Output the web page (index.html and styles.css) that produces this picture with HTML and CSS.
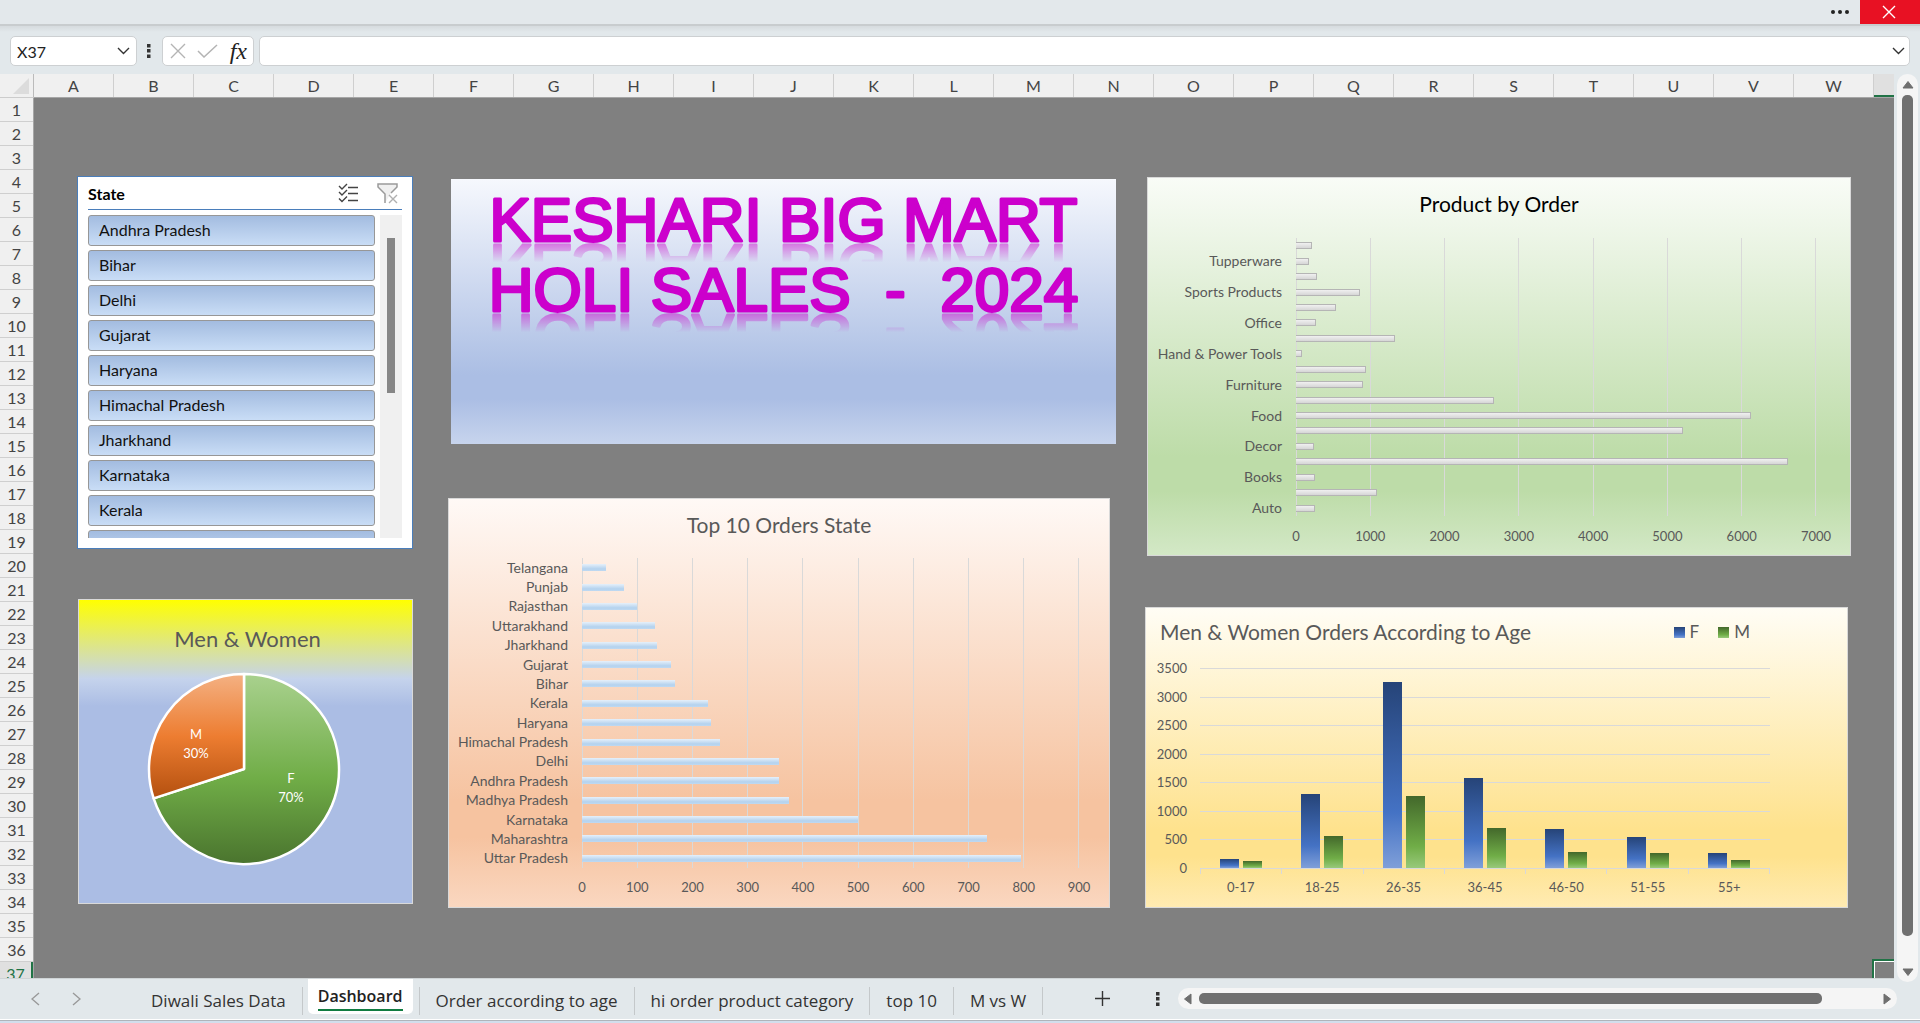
FILE: index.html
```html
<!DOCTYPE html>
<html lang="en">
<head>
<meta charset="utf-8">
<title>Dashboard</title>
<link rel="stylesheet" href="styles.css">
</head>
<body>
<div class="app">
  <header class="titlebar">
    <button class="more" aria-label="More options"><svg width="20" height="6" viewBox="0 0 20 6"><g fill="#222"><circle cx="3" cy="3" r="2"/><circle cx="10" cy="3" r="2"/><circle cx="17" cy="3" r="2"/></g></svg></button>
    <button class="close" aria-label="Close"><svg width="14" height="14" viewBox="0 0 14 14"><path d="M1 1l12 12M13 1L1 13" stroke="#fff" stroke-width="1.4"/></svg></button>
  </header>

  <div class="formulabar">
    <div class="namebox">
      <input type="text" value="X37" aria-label="Name box">
      <button aria-label="Open name list"><svg width="13" height="8" viewBox="0 0 13 8"><path d="M1 1l5.500 5.500L12 1" fill="none" stroke="#333" stroke-width="1.4"/></svg></button>
    </div>
    <svg class="grip" width="4" height="14" viewBox="0 0 4 14"><path d="M0 0h3.500v3.500h-3.500zM0 5h3.500v3.500h-3.500zM0 10.500h3.500v3.500h-3.500z" fill="#333"/></svg>
    <div class="fxbox">
      <button aria-label="Cancel"><svg width="16" height="16" viewBox="0 0 16 16"><path d="M1 1l14 14M15 1L1 15" stroke="#b4b4b4" stroke-width="1.4"/></svg></button>
      <button aria-label="Enter"><svg width="21" height="14" viewBox="0 0 21 14"><path d="M1 7l6 6L20 1" fill="none" stroke="#b4b4b4" stroke-width="1.500"/></svg></button>
      <button class="fx" aria-label="Insert function">fx</button>
    </div>
    <div class="formula">
      <input type="text" value="" aria-label="Formula bar">
      <button aria-label="Expand formula bar"><svg width="13" height="8" viewBox="0 0 13 8"><path d="M1 1l5.500 5.500L12 1" fill="none" stroke="#333" stroke-width="1.4"/></svg></button>
    </div>
  </div>

  <div class="workspace">
    <div class="grid">
      <div class="corner"><svg width="16" height="16" viewBox="0 0 16 16"><path d="M16 0v16H0z" fill="#dcdcdc"/></svg></div>
      <div class="cols"><span>A</span><span>B</span><span>C</span><span>D</span><span>E</span><span>F</span><span>G</span><span>H</span><span>I</span><span>J</span><span>K</span><span>L</span><span>M</span><span>N</span><span>O</span><span>P</span><span>Q</span><span>R</span><span>S</span><span>T</span><span>U</span><span>V</span><span>W</span><span class="current"></span></div>
      <div class="rows"><span>1</span><span>2</span><span>3</span><span>4</span><span>5</span><span>6</span><span>7</span><span>8</span><span>9</span><span>10</span><span>11</span><span>12</span><span>13</span><span>14</span><span>15</span><span>16</span><span>17</span><span>18</span><span>19</span><span>20</span><span>21</span><span>22</span><span>23</span><span>24</span><span>25</span><span>26</span><span>27</span><span>28</span><span>29</span><span>30</span><span>31</span><span>32</span><span>33</span><span>34</span><span>35</span><span>36</span><span class="current">37</span></div>

      <main class="sheet">
        <div class="column column-left">
          <section class="slicer">
            <header>
              <h2>State</h2>
              <button aria-label="Multi-select"><svg width="20" height="20" viewBox="0 0 20 20"><path d="M1 3l3 3 5-5M1 9l3 3 5-5M1 15.500l3 3 5-5" fill="none" stroke="#444" stroke-width="1.4"/><path d="M10 4.500h10M10 10.500h10M10 17.500h10" stroke="#444" stroke-width="1.6"/></svg></button>
              <button aria-label="Clear filter"><svg width="21" height="21" viewBox="0 0 21 21"><path d="M8 20v-9L1 4V1h19v3l-6 6" fill="#f0f0f0" stroke="#9a9a9a" stroke-width="1.500"/><path d="M12 12l8 8M20 12l-8 8" stroke="#b0b0b0" stroke-width="1.4"/></svg></button>
            </header>
            <div class="slicer-body">
              <div class="slicer-list">
                <button>Andhra Pradesh</button><button>Bihar</button><button>Delhi</button><button>Gujarat</button><button>Haryana</button><button>Himachal Pradesh</button><button>Jharkhand</button><button>Karnataka</button><button>Kerala</button><button aria-label="Next state"></button>
              </div>
              <div class="slicer-track"><div class="slicer-thumb"></div></div>
            </div>
          </section>

          <section class="chart pie-chart">
            <h2>Men &amp; Women</h2>
            <svg class="pie" width="194" height="194" viewBox="-97 -97 194 194">
              <defs>
                <linearGradient id="men" x1="0" y1="0" x2="0" y2="1"><stop offset="0" stop-color="#f4b183"/><stop offset=".5" stop-color="#ed7d31"/><stop offset="1" stop-color="#b4500f"/></linearGradient>
                <linearGradient id="women" x1="0" y1="0" x2="0" y2="1"><stop offset="0" stop-color="#a9d18e"/><stop offset=".55" stop-color="#70ad47"/><stop offset="1" stop-color="#4a742e"/></linearGradient>
              </defs>
              <g stroke="#fff" stroke-width="2.500" stroke-linejoin="round">
                <path d="M0 0V-95A95 95 0 1 1 -90.350 29.360Z" fill="url(#women)"/>
                <path d="M0 0L-90.350 29.360A95 95 0 0 1 0 -95Z" fill="url(#men)"/>
              </g>
              <g class="pie-labels"><text x="-48" y="-30">M</text><text x="-48" y="-11">30%</text><text x="47" y="14">F</text><text x="47" y="33">70%</text></g>
            </svg>
          </section>
        </div>

        <div class="column column-middle">
          <section class="banner">
            <h1>
              <span class="banner-line"><svg width="100%" height="46"><text x="50%" y="44">KESHARI BIG MART</text></svg></span>
              <span class="banner-line"><svg width="100%" height="46"><text x="50%" y="44">HOLI SALES&#160; -&#160; 2024</text></svg></span>
            </h1>
          </section>

          <section class="chart bar-chart states">
            <h2>Top 10 Orders State</h2>
            <div class="hplot">
              <div class="labels"><span>Telangana</span><span>Punjab</span><span>Rajasthan</span><span>Uttarakhand</span><span>Jharkhand</span><span>Gujarat</span><span>Bihar</span><span>Kerala</span><span>Haryana</span><span>Himachal Pradesh</span><span>Delhi</span><span>Andhra Pradesh</span><span>Madhya Pradesh</span><span>Karnataka</span><span>Maharashtra</span><span>Uttar Pradesh</span></div>
              <div class="lines"><i></i><i></i><i></i><i></i><i></i><i></i><i></i><i></i><i></i></div>
              <div class="bars"><div><b style="width:4.9%"></b></div><div><b style="width:8.4%"></b></div><div><b style="width:11%"></b></div><div><b style="width:14.6%"></b></div><div><b style="width:15%"></b></div><div><b style="width:18%"></b></div><div><b style="width:18.7%"></b></div><div><b style="width:25.3%"></b></div><div><b style="width:25.9%"></b></div><div><b style="width:27.7%"></b></div><div><b style="width:39.6%"></b></div><div><b style="width:39.6%"></b></div><div><b style="width:41.7%"></b></div><div><b style="width:55.6%"></b></div><div><b style="width:81.4%"></b></div><div><b style="width:88.4%"></b></div></div>
              <div class="axis"><span>0</span><span>100</span><span>200</span><span>300</span><span>400</span><span>500</span><span>600</span><span>700</span><span>800</span><span>900</span></div>
            </div>
          </section>
        </div>

        <div class="column column-right">
          <section class="chart bar-chart products">
            <h2>Product by Order</h2>
            <div class="hplot">
              <div class="labels"><span></span><span>Tupperware</span><span></span><span>Sports Products</span><span></span><span>Office</span><span></span><span>Hand &amp; Power Tools</span><span></span><span>Furniture</span><span></span><span>Food</span><span></span><span>Decor</span><span></span><span>Books</span><span></span><span>Auto</span></div>
              <div class="lines"><i></i><i></i><i></i><i></i><i></i><i></i><i></i></div>
              <div class="bars"><div><b style="width:3.1%"></b></div><div><b style="width:2.5%"></b></div><div><b style="width:4%"></b></div><div><b style="width:12.4%"></b></div><div><b style="width:7.6%"></b></div><div><b style="width:3.8%"></b></div><div><b style="width:19%"></b></div><div><b style="width:1.1%"></b></div><div><b style="width:13.4%"></b></div><div><b style="width:12.9%"></b></div><div><b style="width:38%"></b></div><div><b style="width:87.5%"></b></div><div><b style="width:74.5%"></b></div><div><b style="width:3.5%"></b></div><div><b style="width:94.6%"></b></div><div><b style="width:3.6%"></b></div><div><b style="width:15.5%"></b></div><div><b style="width:3.6%"></b></div></div>
              <div class="axis"><span>0</span><span>1000</span><span>2000</span><span>3000</span><span>4000</span><span>5000</span><span>6000</span><span>7000</span></div>
            </div>
          </section>

          <section class="chart ages">
            <header>
              <h2>Men &amp; Women Orders According to Age</h2>
              <div class="legend"><span class="key-f">F</span><span class="key-m">M</span></div>
            </header>
            <div class="vplot">
              <div class="scale"><span>3500</span><span>3000</span><span>2500</span><span>2000</span><span>1500</span><span>1000</span><span>500</span><span>0</span></div>
              <div class="vlines"><i></i><i></i><i></i><i></i><i></i><i></i><i></i></div>
              <div class="groups">
                <div><b class="f" style="height:4.5%"></b><b class="m" style="height:3.5%"></b></div>
                <div><b class="f" style="height:37.1%"></b><b class="m" style="height:16%"></b></div>
                <div><b class="f" style="height:93.2%"></b><b class="m" style="height:36%"></b></div>
                <div><b class="f" style="height:45.1%"></b><b class="m" style="height:20%"></b></div>
                <div><b class="f" style="height:19.5%"></b><b class="m" style="height:8%"></b></div>
                <div><b class="f" style="height:15.5%"></b><b class="m" style="height:7.5%"></b></div>
                <div><b class="f" style="height:7.5%"></b><b class="m" style="height:4%"></b></div>
              </div>
              <div class="ticks"><i></i><i></i><i></i><i></i><i></i><i></i><i></i></div>
              <div class="categories"><span>0-17</span><span>18-25</span><span>26-35</span><span>36-45</span><span>46-50</span><span>51-55</span><span>55+</span></div>
            </div>
          </section>
        </div>
        <div class="selection"></div>
      </main>
    </div>

    <div class="vscroll">
      <button aria-label="Scroll up"><svg width="12" height="9" viewBox="0 0 12 9"><path d="M6 1.500L11 8H1z" fill="#6f6f6f" stroke="#6f6f6f" stroke-linejoin="round"/></svg></button>
      <div class="thumb"></div>
      <button aria-label="Scroll down"><svg width="12" height="9" viewBox="0 0 12 9"><path d="M6 7.500L11 1H1z" fill="#6f6f6f" stroke="#6f6f6f" stroke-linejoin="round"/></svg></button>
    </div>
  </div>

  <footer class="tabbar">
    <div class="tabnav">
      <button aria-label="Previous sheet"><svg width="9" height="14" viewBox="0 0 9 14"><path d="M8 1L1 7l7 6" fill="none" stroke="#999" stroke-width="1.4"/></svg></button>
      <button aria-label="Next sheet"><svg width="9" height="14" viewBox="0 0 9 14"><path d="M1 1l7 6-7 6" fill="none" stroke="#999" stroke-width="1.4"/></svg></button>
    </div>
    <nav class="tabs">
      <button>Diwali Sales Data</button>
      <button class="active"><span>Dashboard</span></button>
      <button>Order according to age</button>
      <button>hi order product category</button>
      <button>top 10</button>
      <button>M vs W</button>
    </nav>
    <button class="add" aria-label="New sheet"><svg width="15" height="15" viewBox="0 0 15 15"><path d="M7.500 0v15M0 7.500h15" stroke="#333" stroke-width="1.4"/></svg></button>
    <svg class="grip" width="4" height="14" viewBox="0 0 4 14"><path d="M0 0h3.500v3.500h-3.500zM0 5h3.500v3.500h-3.500zM0 10.500h3.500v3.500h-3.500z" fill="#333"/></svg>
    <div class="hscroll">
      <button aria-label="Scroll left"><svg width="9" height="12" viewBox="0 0 9 12"><path d="M1.500 6L8 1v10z" fill="#6f6f6f" stroke="#6f6f6f" stroke-linejoin="round"/></svg></button>
      <div class="thumb"></div>
      <button aria-label="Scroll right"><svg width="9" height="12" viewBox="0 0 9 12"><path d="M7.500 6L1 1v10z" fill="#6f6f6f" stroke="#6f6f6f" stroke-linejoin="round"/></svg></button>
    </div>
  </footer>
</div>
</body>
</html>
```
FILE: styles.css
```css
* { box-sizing: border-box; }
body { margin: 0; font-family: Lato, "Liberation Sans", sans-serif; font-size: 15px; color: #444; }
button { border: 0; padding: 0; margin: 0; background: none; font: inherit; color: inherit; display: flex; align-items: center; justify-content: center; }
input { border: 0; padding: 0; outline: 0; background: none; font: inherit; color: #222; min-width: 0; flex: 1; }
h1, h2 { margin: 0; font-weight: 400; }
svg { display: block; flex: none; }

.app { height: 100vh; display: flex; flex-direction: column; background: #e2e8eb; overflow: hidden; }

/* Window bar */
.titlebar { flex: none; height: 26px; display: flex; justify-content: flex-end; align-items: flex-start; border-bottom: 2px solid #c8ccce; background: #e3e8eb; }
.titlebar .more { width: 40px; height: 23px; }
.titlebar .close { width: 60px; height: 24px; background: #e81123; padding-right: 2px; }

/* Formula bar */
.formulabar { flex: none; height: 48px; display: flex; align-items: center; padding: 2px 10px 0; background: linear-gradient(#d6dbde, #e2e8eb 6px); }
.namebox, .fxbox, .formula { height: 30px; background: #fff; border: 1px solid #cdd0d2; border-radius: 5px; display: flex; align-items: center; }
.namebox { width: 127px; padding: 0 6px; font-size: 16px; }
.formulabar .grip { margin: 0 11px 0 10px; }
.fxbox { width: 92px; justify-content: space-between; padding: 0 6px 0 7px; }
.fx { font: italic 24px/26px "Liberation Serif", serif; color: #222; }
.formula { flex: 1; margin-left: 5px; padding: 0 4px 0 8px; }

/* Worksheet */
.workspace { flex: 1; min-height: 0; display: flex; }
.grid { flex: 1; min-width: 0; display: grid; grid-template: 24px minmax(0, 1fr) / 34px minmax(0, 1fr); border-bottom: 1px solid #cfd4d6; overflow: hidden; }
.corner { background: #f0f0f0; display: flex; align-items: flex-start; justify-content: flex-end; padding: 4px 4px 0 0; border-right: 1px solid #bbb; border-bottom: 1px solid #ccc; }
.cols { display: flex; overflow: hidden; background: #f0f0f0; border-bottom: 1px solid #a6a6a6; }
.cols span { flex: 0 0 80px; display: flex; align-items: center; justify-content: center; border-right: 1px solid #cfcfcf; font-size: 16px; }
.cols .current { background: #e0e0e0; border-bottom: 2px solid #217346; }
.rows { display: flex; flex-direction: column; overflow: hidden; background: #f0f0f0; border-right: 1px solid #a6a6a6; min-height: 0; }
.rows span { flex: 0 0 24px; display: flex; align-items: center; justify-content: center; border-bottom: 1px solid #cfcfcf; font-size: 16px; }
.rows .current { background: #e0e0e0; color: #217346; border-right: 2px solid #217346; }
.sheet { position: relative; background: #808080; display: grid; grid-template-columns: minmax(0, 342fr) minmax(0, 668fr) minmax(0, 706fr); column-gap: 29px; padding: 0 43px; align-items: start; overflow: hidden; }
.selection { position: absolute; right: 0; bottom: 0; width: 22px; height: 19px; border: solid #217346; border-width: 2px 0 0 2px; box-shadow: inset 1px 1px 0 #fff; }
.column { display: flex; flex-direction: column; }
.column-left { padding: 78px 6px 0 0; gap: 50px; }
.column-middle { padding-top: 81px; gap: 54px; }
.column-right { padding-top: 79px; gap: 51px; }

/* Slicer */
.slicer { height: 373px; background: #fff; border: 1px solid #4a7ebb; padding: 0 10px 10px; display: flex; flex-direction: column; }
.slicer header { height: 33px; flex: none; display: flex; align-items: center; gap: 19px; border-bottom: 1px solid #4a7ebb; padding-right: 4px; }
.slicer h2 { flex: 1; font-size: 16px; font-weight: 700; color: #000; }
.slicer-body { flex: 1; min-height: 0; display: flex; gap: 5px; padding-top: 5px; }
.slicer-list { flex: 1; display: flex; flex-direction: column; gap: 4px; overflow: hidden; }
.slicer-list button { flex: 0 0 31px; justify-content: flex-start; padding: 0 0 2px 10px; border: 1px solid #979797; border-radius: 3px; background: linear-gradient(#a3bce0, #c9ddf6); color: #111; font-size: 16px; }
.slicer-track { width: 22px; background: #f0f0f0; padding-top: 23px; }
.slicer-thumb { width: 8px; height: 155px; margin: 0 auto; background: #868686; }

/* Charts */
.chart { border: 1px solid #d9d9d9; color: #595959; font-size: 13px; }
.chart h2 { font-size: 21px; line-height: 26px; text-align: center; }
.pie-chart { height: 305px; margin-left: 1px; padding: 26px 4px 0 0; background: linear-gradient(#ff0 0, #c5d3ec 26%, #abbde4 35%); }
.pie-chart h2 { font-size: 22px; padding-left: 8px; }
.pie { margin: 20px auto 0; }
.pie-labels { fill: #fff; font-size: 13px; text-anchor: middle; }

.banner { margin-left: 3px; height: 265px; padding-top: 18px; background: linear-gradient(#f6f8fd, #abbee4 74%, #abbee4 83%, #c7d4ed); }
.banner-line { display: block; height: 46px; margin-bottom: 24px; -webkit-box-reflect: below 0 linear-gradient(transparent 58%, rgba(0, 0, 0, .5)); }
.banner svg { overflow: visible; }
.banner text { font: 62px "Liberation Sans", sans-serif; text-anchor: middle; fill: #c0c; stroke: #c0c; stroke-width: 3px; stroke-linejoin: round; }

.hplot { display: grid; }
.labels { grid-area: 1 / 1; display: flex; flex-direction: column; text-align: right; padding-right: 14px; font-size: 14px; line-height: 16px; }
.labels span { flex: 1 1 0; min-height: 0; display: flex; align-items: center; justify-content: flex-end; white-space: nowrap; }
.lines { grid-area: 1 / 2; display: flex; border-right: 1px solid #d9d9d9; }
.lines i { flex: 1; border-left: 1px solid #d9d9d9; }
.bars { grid-area: 1 / 2; display: flex; flex-direction: column; z-index: 1; }
.bars div { flex: 1; display: flex; align-items: center; }
.bars b { height: 7px; }
.axis { grid-area: 2 / 2; display: flex; justify-content: space-between; align-items: flex-end; }
.axis span { width: 0; display: flex; justify-content: center; }

.states { margin-right: 6px; height: 410px; padding: 13px 30px 0 0; background: linear-gradient(#fff9f6, #f6c3a0 74%, #f6c3a0 83%, #fad7c0); }
.states h2 { padding-left: 30px; }
.states .hplot { margin-top: 20px; grid-template: 310px 27px / 133px 1fr; }
.states .bars b { background: linear-gradient(#e6f0fa, #b4d2ee 70%, #bfd9f1); }
.products { margin-left: 2px; height: 379px; padding: 13px 34px 0 0; background: linear-gradient(#f9fcf7, #bddca8 74%, #bddca8 83%, #d3e8c6); }
.products h2 { padding-left: 34px; color: #000; }
.products .hplot { margin-top: 21px; grid-template: 278px 28px / 148px 1fr; }
.products .bars b { border: 1px solid #b5b5b5; border-left: 0; background: linear-gradient(#f0f0f0, #d6d6d6); }

.ages { margin-right: 3px; height: 301px; padding: 11px 77px 0 0; background: linear-gradient(#fffdf5, #fee28d 74%, #fee28d 83%, #ffebb2); }
.ages header { display: flex; justify-content: space-between; padding: 0 20px 0 14px; }
.legend { display: flex; gap: 19px; font-size: 17px; line-height: 26px; }
.legend span { display: flex; align-items: center; gap: 5px; }
.legend span::before { content: ""; width: 11px; height: 11px; }
.f, .key-f::before { background: linear-gradient(#264478, #4472c4 70%, #7f9fd9); }
.m, .key-m::before { background: linear-gradient(#43682b, #70ad47 70%, #98c97a); }
.vplot { display: grid; grid-template: 200px 6px 21px / 54px 1fr; margin-top: 23px; }
.scale { grid-area: 1 / 1; display: flex; flex-direction: column; justify-content: space-between; text-align: right; padding-right: 13px; }
.scale span { height: 0; line-height: 0; }
.vlines { grid-area: 1 / 2; display: flex; flex-direction: column; }
.vlines i { flex: 1; border-top: 1px solid #d9d9d9; }
.groups { grid-area: 1 / 2; display: flex; z-index: 1; }
.groups div { flex: 1; display: flex; justify-content: center; align-items: flex-end; gap: 4px; }
.groups b { width: 19px; }
.ticks { grid-area: 2 / 2; display: flex; border: solid #d9d9d9; border-width: 1px 1px 0 0; }
.ticks i { flex: 1; border-left: 1px solid #d9d9d9; }
.categories { grid-area: 3 / 2; display: flex; align-items: flex-end; }
.categories span { flex: 1; text-align: center; }

/* Scrollbars */
.vscroll { flex: none; width: 21px; margin: 0 2px -3px 3px; padding: 6px 5px 5px; background: #f5f5f5; border-radius: 11px; display: flex; flex-direction: column; z-index: 1; }
.vscroll .thumb { flex: 1; margin: 6px 0 32px; background: #707070; border-radius: 5px; }
.hscroll { flex: 1; height: 21px; margin-right: 23px; padding: 5px; background: #f5f5f5; border-radius: 11px; display: flex; align-items: center; }
.hscroll .thumb { flex: 1; height: 11px; margin: 0 61px 0 7px; background: #707070; border-radius: 5px; }

/* Sheet tabs */
.tabbar { flex: none; height: 44px; padding-bottom: 5px; display: flex; align-items: center; background: linear-gradient(#e2e8eb 40px, #fff 40px 41px, #b0b4ba 41px 42px, #d2deec 42px); }
.tabnav { width: 135px; padding-left: 31px; display: flex; gap: 32px; }
.tabs { align-self: stretch; display: flex; align-items: flex-start; font-family: "Open Sans", "Noto Sans", sans-serif; font-size: 17px; color: #333; }
.tabs button { height: 28px; margin-top: 8px; padding: 0 16px 2px; border-right: 1px solid #c4c8ca; white-space: nowrap; }
.tabs .active { height: 35px; margin: 0 6px 0 5px; padding: 0 10px; background: #fff; border: 0; border-radius: 0 0 5px 5px; font-size: 16px; font-weight: 600; color: #222; }
.tabs .active span { border-bottom: 2px solid #107c41; line-height: 26px; }
.tabs .active + button { border-left: 1px solid #c4c8ca; }
.add { margin-left: 52px; }
.tabbar .grip { margin: 0 18px 0 46px; }
```
